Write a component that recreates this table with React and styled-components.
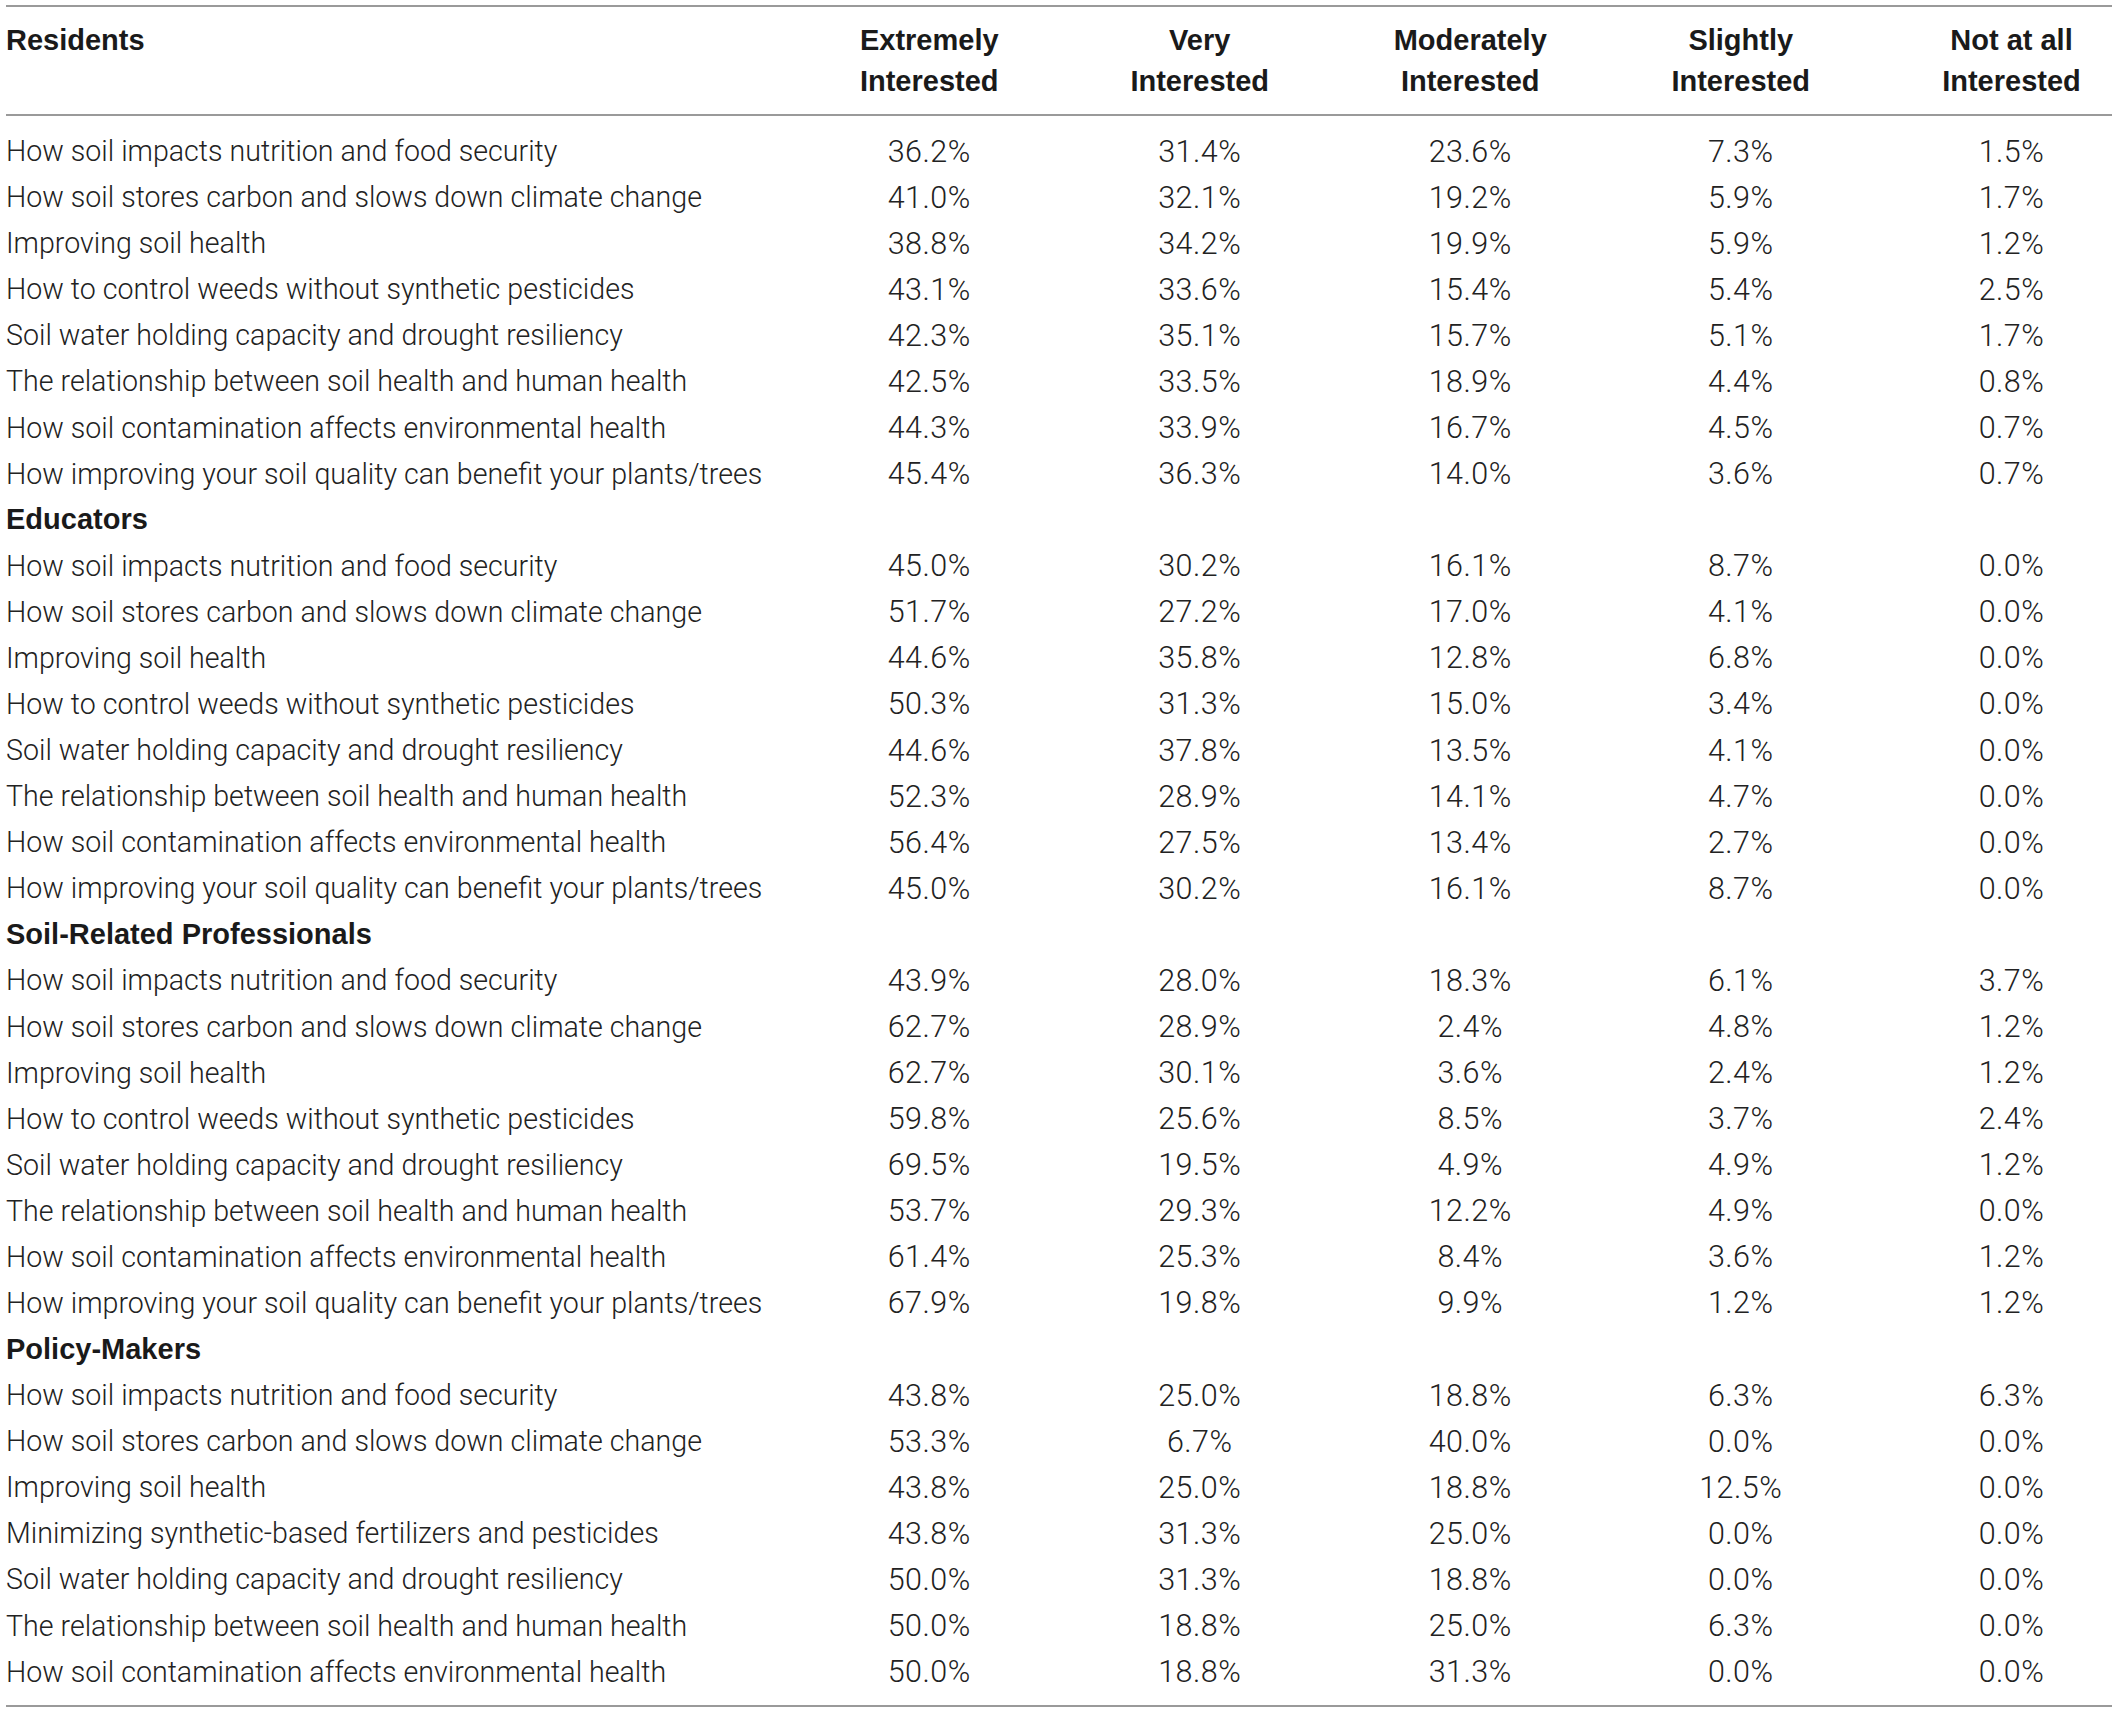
import React from "react";
import styled, { createGlobalStyle } from "styled-components";

const Global = createGlobalStyle`
  html, body { margin: 0; padding: 0; background: #ffffff; }
  body { width: 2118px; min-height: 1711px; }
`;

const Page = styled.div`
  padding: 5px 6px 6px 6px;
  width: 2106px;
`;

const Table = styled.div`
  border-top: 2px solid #9a9a9a;
  border-bottom: 2px solid #9a9a9a;
  display: flex;
  flex-direction: column;
`;

const COLS = "788px repeat(4, 270.5px) 1fr";

const HeadRow = styled.div`
  display: grid;
  grid-template-columns: ${COLS};
  padding: 13px 0 12px 0;
  border-bottom: 2px solid #9a9a9a;
  align-items: start;
`;

const HeadCell = styled.div`
  font-family: "Liberation Sans", Arial, sans-serif;
  font-weight: 700;
  font-size: 29px;
  line-height: 41px;
  color: #1a1a1a;
  text-align: ${(p) => (p.$left ? "left" : "center")};
  padding-left: ${(p) => (p.$last ? "35px" : "0")};
`;

const Body = styled.div`
  display: flex;
  flex-direction: column;
  padding: 12px 0 10px 0;
`;

const Row = styled.div`
  display: grid;
  grid-template-columns: ${COLS};
  height: 46.08px;
  align-items: center;
`;

const Label = styled.div`
  font-family: Roboto, "Liberation Sans", Arial, sans-serif;
  font-weight: 300;
  font-size: 28.6px;
  color: #222222;
  white-space: nowrap;
`;

const Group = styled.div`
  font-family: "Liberation Sans", Arial, sans-serif;
  font-weight: 700;
  font-size: 29px;
  color: #1a1a1a;
  white-space: nowrap;
`;

const Num = styled.div`
  font-family: Roboto, "Liberation Sans", Arial, sans-serif;
  font-weight: 300;
  font-size: 30.5px;
  letter-spacing: 0.5px;
  color: #222222;
  text-align: center;
  padding-left: ${(p) => (p.$last ? "35px" : "0")};
`;

const T = {
  nut: "How soil impacts nutrition and food security",
  carb: "How soil stores carbon and slows down climate change",
  imp: "Improving soil health",
  weed: "How to control weeds without synthetic pesticides",
  water: "Soil water holding capacity and drought resiliency",
  rel: "The relationship between soil health and human health",
  cont: "How soil contamination affects environmental health",
  plants: "How improving your soil quality can benefit your plants/trees",
  min: "Minimizing synthetic-based fertilizers and pesticides",
};

const groups = [
  {
    name: "Residents",
    header: true,
    rows: [
      [T.nut, "36.2", "31.4", "23.6", "7.3", "1.5"],
      [T.carb, "41.0", "32.1", "19.2", "5.9", "1.7"],
      [T.imp, "38.8", "34.2", "19.9", "5.9", "1.2"],
      [T.weed, "43.1", "33.6", "15.4", "5.4", "2.5"],
      [T.water, "42.3", "35.1", "15.7", "5.1", "1.7"],
      [T.rel, "42.5", "33.5", "18.9", "4.4", "0.8"],
      [T.cont, "44.3", "33.9", "16.7", "4.5", "0.7"],
      [T.plants, "45.4", "36.3", "14.0", "3.6", "0.7"],
    ],
  },
  {
    name: "Educators",
    rows: [
      [T.nut, "45.0", "30.2", "16.1", "8.7", "0.0"],
      [T.carb, "51.7", "27.2", "17.0", "4.1", "0.0"],
      [T.imp, "44.6", "35.8", "12.8", "6.8", "0.0"],
      [T.weed, "50.3", "31.3", "15.0", "3.4", "0.0"],
      [T.water, "44.6", "37.8", "13.5", "4.1", "0.0"],
      [T.rel, "52.3", "28.9", "14.1", "4.7", "0.0"],
      [T.cont, "56.4", "27.5", "13.4", "2.7", "0.0"],
      [T.plants, "45.0", "30.2", "16.1", "8.7", "0.0"],
    ],
  },
  {
    name: "Soil-Related Professionals",
    rows: [
      [T.nut, "43.9", "28.0", "18.3", "6.1", "3.7"],
      [T.carb, "62.7", "28.9", "2.4", "4.8", "1.2"],
      [T.imp, "62.7", "30.1", "3.6", "2.4", "1.2"],
      [T.weed, "59.8", "25.6", "8.5", "3.7", "2.4"],
      [T.water, "69.5", "19.5", "4.9", "4.9", "1.2"],
      [T.rel, "53.7", "29.3", "12.2", "4.9", "0.0"],
      [T.cont, "61.4", "25.3", "8.4", "3.6", "1.2"],
      [T.plants, "67.9", "19.8", "9.9", "1.2", "1.2"],
    ],
  },
  {
    name: "Policy-Makers",
    rows: [
      [T.nut, "43.8", "25.0", "18.8", "6.3", "6.3"],
      [T.carb, "53.3", "6.7", "40.0", "0.0", "0.0"],
      [T.imp, "43.8", "25.0", "18.8", "12.5", "0.0"],
      [T.min, "43.8", "31.3", "25.0", "0.0", "0.0"],
      [T.water, "50.0", "31.3", "18.8", "0.0", "0.0"],
      [T.rel, "50.0", "18.8", "25.0", "6.3", "0.0"],
      [T.cont, "50.0", "18.8", "31.3", "0.0", "0.0"],
    ],
  },
];

const heads = [
  ["Extremely", "Interested"],
  ["Very", "Interested"],
  ["Moderately", "Interested"],
  ["Slightly", "Interested"],
  ["Not at all", "Interested"],
];

export default function App() {
  return (
    <>
      <Global />
      <Page>
        <Table>
          <HeadRow>
            <HeadCell $left>Residents</HeadCell>
            {heads.map((h, i) => (
              <HeadCell key={i} $last={i === 4}>
                {h[0]}
                <br />
                {h[1]}
              </HeadCell>
            ))}
          </HeadRow>
          <Body>
            {groups.map((g) => (
              <React.Fragment key={g.name}>
                {!g.header && (
                  <Row>
                    <Group>{g.name}</Group>
                  </Row>
                )}
                {g.rows.map((r, i) => (
                  <Row key={i}>
                    <Label>{r[0]}</Label>
                    {r.slice(1).map((v, j) => (
                      <Num key={j} $last={j === 4}>
                        {v}%
                      </Num>
                    ))}
                  </Row>
                ))}
              </React.Fragment>
            ))}
          </Body>
        </Table>
      </Page>
    </>
  );
}
